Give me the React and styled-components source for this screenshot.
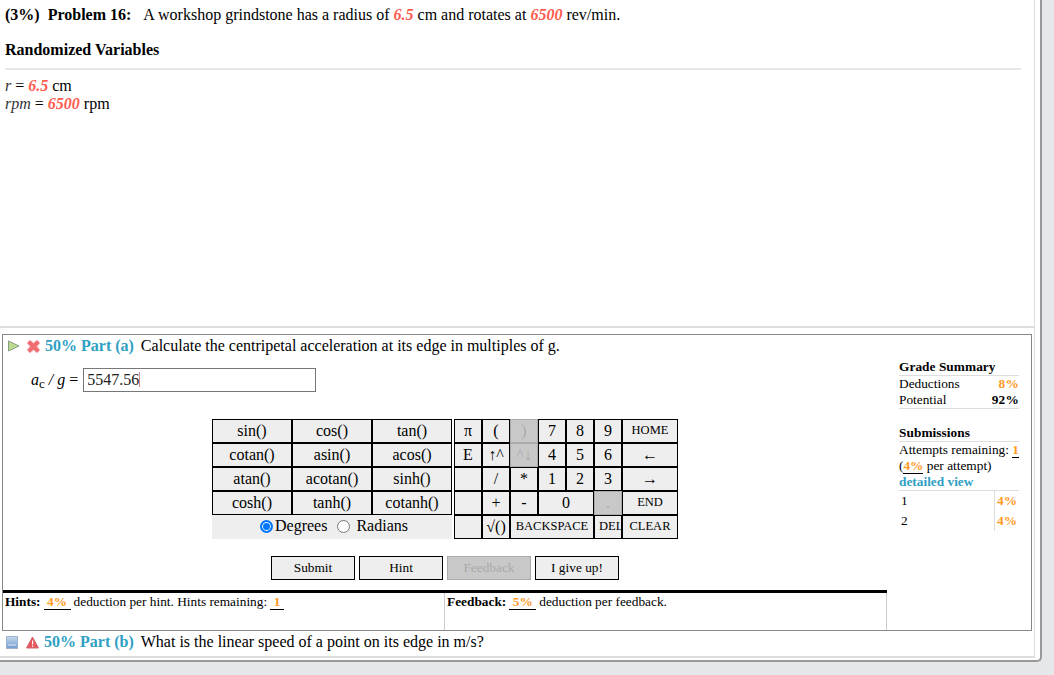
import React from 'react';
import styled, { createGlobalStyle } from 'styled-components';

const Global = createGlobalStyle`
  html, body { margin: 0; padding: 0; height: 675px; overflow: hidden; background: #e6e7e8; }
  body { font-family: "Liberation Serif", "Times New Roman", serif; font-size: 16px; color: #000; }
`;
const Card = styled.div`
  width: 1042px; height: 662px; background: #fff; box-sizing: border-box;
  border-right: 2px solid #999; border-bottom: 2px solid #999; border-bottom-right-radius: 5px;
`;
const Inner = styled.div`
  width: 1035px; height: 658px; box-sizing: border-box;
  border-right: 1px solid #ddd; border-bottom: 2px solid #ddd;
`;
const Problem = styled.div`height: 328px; box-sizing: border-box; padding: 6px 0 0 5px; border-bottom: 2px solid #ddd; margin-bottom: 6px;`;
const Statement = styled.div`display: flex; line-height: 17px; height: 17px;`;
const ProblemLabel = styled.b`margin-right: 12px; white-space: pre;`;
const Value = styled.i`color: #ff5b4d; font-weight: 700;`;
const Heading = styled.div`font-weight: 700; margin-top: 18px; height: 27px; line-height: 18px; width: 1016px; border-bottom: 2px solid #e6e6e6;`;
const Vars = styled.div`margin-top: 7px; line-height: 18px;`;
const Var = styled.i`color: #333;`;

const Panel = styled.div`
  width: 1030px; height: 297px; margin-left: 2px; box-sizing: border-box;
  border: 1px solid #888; display: flex;
`;
const Main = styled.div`width: 884px; flex: none; display: flex; flex-direction: column;`;
const PartRow = styled.div`display: flex; align-items: center; height: 22px; padding-left: 4px;`;
const IconSlot = styled.span`width: 19px; flex: none; display: flex; align-items: center;`;
const PartTitle = styled.b`color: #2f9fc4; font-size: 16px; margin-right: 7px; white-space: pre;`;
const Question = styled.span`font-size: 16px; white-space: pre;`;
const AnswerRow = styled.div`display: flex; align-items: center; margin-top: 10px; padding-left: 28px; height: 25px;`;
const Sub = styled.span`font-size: 13px; font-style: normal; position: relative; top: 3px;`;
const AnswerBox = styled.div`
  width: 233px; height: 24px; box-sizing: border-box; border: 1px solid #777; margin-left: 5px;
  padding-left: 3px; line-height: 22px; color: #222;
`;
const Caret = styled.span`display: inline-block; width: 1px; height: 15px; background: #e08a8a; vertical-align: -2px;`;
const Pads = styled.div`display: flex; margin: 27px 0 0 209px; gap: 2px;`;
const FnPad = styled.div`width: 240px; display: grid; grid-template-columns: repeat(3, 80px); grid-auto-rows: 24px;`;
const Key = styled.div`
  box-sizing: border-box; display: flex; align-items: center; overflow: hidden;
  justify-content: ${p => p.$clip ? 'flex-start' : 'center'}; padding-left: ${p => p.$clip ? '4px' : '0'};
  padding-bottom: ${p => p.$small ? '2px' : '0'};
  white-space: nowrap; font-size: ${p => p.$small ? '12.5px' : '16px'};
  border: 1px solid ${p => p.$off ? '#aaa' : '#000'}; background: ${p => p.$off ? '#c8c8c8' : '#eee'}; color: ${p => p.$off ? '#aaa' : '#000'};
  grid-column: span ${p => p.$span || 1};
`;
const Units = styled.div`
  grid-column: span 3; height: 24px; box-sizing: border-box; padding: 0 0 2px 4px; background: #eee; display: flex; align-items: center; justify-content: center;
`;
const Radio = styled.span`
  width: 13px; height: 13px; border-radius: 50%; box-sizing: border-box; flex: none;
  border: ${p => p.$on ? '2px solid #0075ff' : '1px solid #767676'};
  box-shadow: ${p => p.$on ? 'inset 0 0 0 1px #fff' : 'none'};
  background: ${p => p.$on ? '#0075ff' : '#fff'};
  margin-right: ${p => p.$on ? '2px' : '6px'}; margin-left: ${p => p.$on ? '0' : '10px'};
`;
const NumPad = styled.div`width: 224px; display: grid; grid-template-columns: repeat(6, 28px) 56px; grid-auto-rows: 24px;`;
const Actions = styled.div`display: flex; gap: 4px; margin: 17px 0 0 268px;`;
const ActionButton = styled.div`
  width: 84px; height: 24px; box-sizing: border-box; display: flex; align-items: center; justify-content: center;
  font-size: 13.33px; border: 1px solid ${p => p.$off ? '#aaa' : '#000'}; background: ${p => p.$off ? '#c8c8c8' : '#eee'}; color: ${p => p.$off ? '#aaa' : '#000'};
`;
const HintBar = styled.div`display: flex; margin-top: 10px; border-top: 3px solid #000; flex: 1; font-size: 13.33px;`;
const HintCell = styled.div`
  width: ${p => p.$w}px; flex: none; box-sizing: border-box; padding: 1px 0 0 2px; line-height: 15px; white-space: pre;
  border-right: 1px solid #ccc;
`;
const Blank = styled.span`
  display: inline-block; min-width: ${p => p.$w}px; text-align: center; color: #ff9a1f; font-weight: 700; border-bottom: 1px solid #000; margin: 0 3px; line-height: 14px;
`;
const Side = styled.div`flex: 1; padding: 25px 12px 0 12px; font-size: 13.33px; line-height: 16px;`;
const SideHead = styled.div`font-weight: 700; letter-spacing: .05px; border-bottom: 1px solid #ddd; height: 15px; line-height: 14px; margin-top: ${p => p.$mt || 0}px;`;
const SideRow = styled.div`display: flex; justify-content: space-between; height: 16px; line-height: 16px;`;
const SideRows = styled.div`border-bottom: 1px solid #ddd;`;
const Amount = styled.b`color: ${p => p.$plain ? '#000' : '#ff9a1f'}; letter-spacing: .2px;`;
const Attempts = styled.div`line-height: 16px; white-space: nowrap;`;
const SmallBlank = styled.span`color: #ff9a1f; font-weight: 700; border-bottom: 1px solid #000;`;
const DetailLink = styled.div`color: #2f9fc4; font-weight: 700; height: 16px; border-bottom: 1px solid #ddd;`;
const SubRow = styled.div`display: flex; height: 20px; line-height: 20px;`;
const SubNo = styled.div`width: 96px; padding-left: 2px; border-right: 1px solid #ddd; box-sizing: border-box;`;
const SubPct = styled.b`color: #ff9a1f; padding-left: 2px; letter-spacing: .2px;`;
const PartB = styled.div`display: flex; align-items: center; height: 22px; padding-left: 6px;`;
const PartBIcons = styled.span`display: flex; gap: 8px; width: 38px; flex: none; align-items: center;`;

const PlayIcon = () => (
  <svg width="13" height="12" viewBox="0 0 13 12"><path d="M1.5 1 L12 6 L1.5 11 Z" fill="#b9dc8e" stroke="#8a9a86" strokeWidth="1"/></svg>
);
const CrossIcon = () => (
  <svg width="15" height="15" viewBox="0 0 15 15"><path d="M1 4 L4 1 L7.5 4 L11 1 L14 4 L11 7.5 L14 11 L11 14 L7.5 11 L4 14 L1 11 L4 7.5 Z" fill="#f26d72" stroke="#f4bcbe" strokeWidth="1"/></svg>
);
const MinimizeIcon = () => (
  <svg width="12" height="13" viewBox="0 0 12 13"><defs><linearGradient id="mg" x1="0" y1="0" x2="0" y2="1"><stop offset="0" stopColor="#c8d9ee"/><stop offset="1" stopColor="#6f9bd1"/></linearGradient></defs><rect x=".5" y=".5" width="11" height="12" fill="url(#mg)" stroke="#9fb4cc"/><rect x="2" y="8" width="8" height="2" fill="#b4cbe8"/></svg>
);
const WarnIcon = () => (
  <svg width="13" height="13" viewBox="0 0 13 13"><path d="M6.5 1 L12.5 12 L.5 12 Z" fill="#e8555a" stroke="#d0686c" strokeWidth="1"/><rect x="6" y="4.5" width="1.2" height="4" fill="#fff"/><rect x="6" y="9.5" width="1.2" height="1.3" fill="#fff"/></svg>
);

const fnKeys = ['sin()', 'cos()', 'tan()', 'cotan()', 'asin()', 'acos()', 'atan()', 'acotan()', 'sinh()', 'cosh()', 'tanh()', 'cotanh()'];
const numKeys = [
  { t: 'π' }, { t: '(' }, { t: ')', off: 1 }, { t: '7' }, { t: '8' }, { t: '9' }, { t: 'HOME', small: 1 },
  { t: 'E' }, { t: '↑^' }, { t: '^↓', off: 1 }, { t: '4' }, { t: '5' }, { t: '6' }, { t: '←' },
  { t: '' }, { t: '/' }, { t: '*' }, { t: '1' }, { t: '2' }, { t: '3' }, { t: '→' },
  { t: '' }, { t: '+' }, { t: '-' }, { t: '0', span: 2 }, { t: '.', off: 1 }, { t: 'END', small: 1 },
  { t: '' }, { t: '√()' }, { t: 'BACKSPACE', span: 3, small: 1 }, { t: 'DEL', small: 1, clip: 1 }, { t: 'CLEAR', small: 1 },
];

export default function App() {
  return (
    <>
      <Global />
      <Card>
        <Inner>
          <Problem>
            <Statement>
              <ProblemLabel>(3%)  Problem 16:</ProblemLabel>
              <span>A workshop grindstone has a radius of <Value>6.5</Value> cm and rotates at <Value>6500</Value> rev/min.</span>
            </Statement>
            <Heading>Randomized Variables</Heading>
            <Vars>
              <div><Var>r</Var> = <Value>6.5</Value> cm</div>
              <div><Var>rpm</Var> = <Value>6500</Value> rpm</div>
            </Vars>
          </Problem>
          <Panel>
            <Main>
              <PartRow>
                <IconSlot><PlayIcon /></IconSlot>
                <IconSlot><CrossIcon /></IconSlot>
                <PartTitle>50% Part (a)</PartTitle>
                <Question>Calculate the centripetal acceleration at its edge in multiples of g.</Question>
              </PartRow>
              <AnswerRow>
                <i>a<Sub>c</Sub> / g</i>&nbsp;=
                <AnswerBox>5547.56<Caret /></AnswerBox>
              </AnswerRow>
              <Pads>
                <FnPad>
                  {fnKeys.map(k => <Key key={k}>{k}</Key>)}
                  <Units>
                    <Radio $on />Degrees<Radio />Radians
                  </Units>
                </FnPad>
                <NumPad>
                  {numKeys.map((k, i) => <Key key={i} $off={k.off} $small={k.small} $span={k.span} $clip={k.clip}>{k.t}</Key>)}
                </NumPad>
              </Pads>
              <Actions>
                <ActionButton>Submit</ActionButton>
                <ActionButton>Hint</ActionButton>
                <ActionButton $off>Feedback</ActionButton>
                <ActionButton>I give up!</ActionButton>
              </Actions>
              <HintBar>
                <HintCell $w={442}><b>Hints:</b><Blank $w={27}>4%</Blank>deduction per hint. Hints remaining:<Blank $w={14}>1</Blank></HintCell>
                <HintCell $w={442}><b>Feedback:</b><Blank $w={27}>5%</Blank>deduction per feedback.</HintCell>
              </HintBar>
            </Main>
            <Side>
              <SideHead>Grade Summary</SideHead>
              <SideRows>
                <SideRow><span>Deductions</span><Amount>8%</Amount></SideRow>
                <SideRow><span>Potential</span><Amount $plain>92%</Amount></SideRow>
              </SideRows>
              <SideHead $mt={17}>Submissions</SideHead>
              <Attempts>
                Attempts remaining: <SmallBlank>1</SmallBlank><br />
                (<SmallBlank>4%</SmallBlank> per attempt)
              </Attempts>
              <DetailLink>detailed view</DetailLink>
              <SubRow><SubNo>1</SubNo><SubPct>4%</SubPct></SubRow>
              <SubRow><SubNo>2</SubNo><SubPct>4%</SubPct></SubRow>
            </Side>
          </Panel>
          <PartB>
            <PartBIcons><MinimizeIcon /><WarnIcon /></PartBIcons>
            <PartTitle>50% Part (b)</PartTitle>
            <Question>What is the linear speed of a point on its edge in m/s?</Question>
          </PartB>
        </Inner>
      </Card>
    </>
  );
}
